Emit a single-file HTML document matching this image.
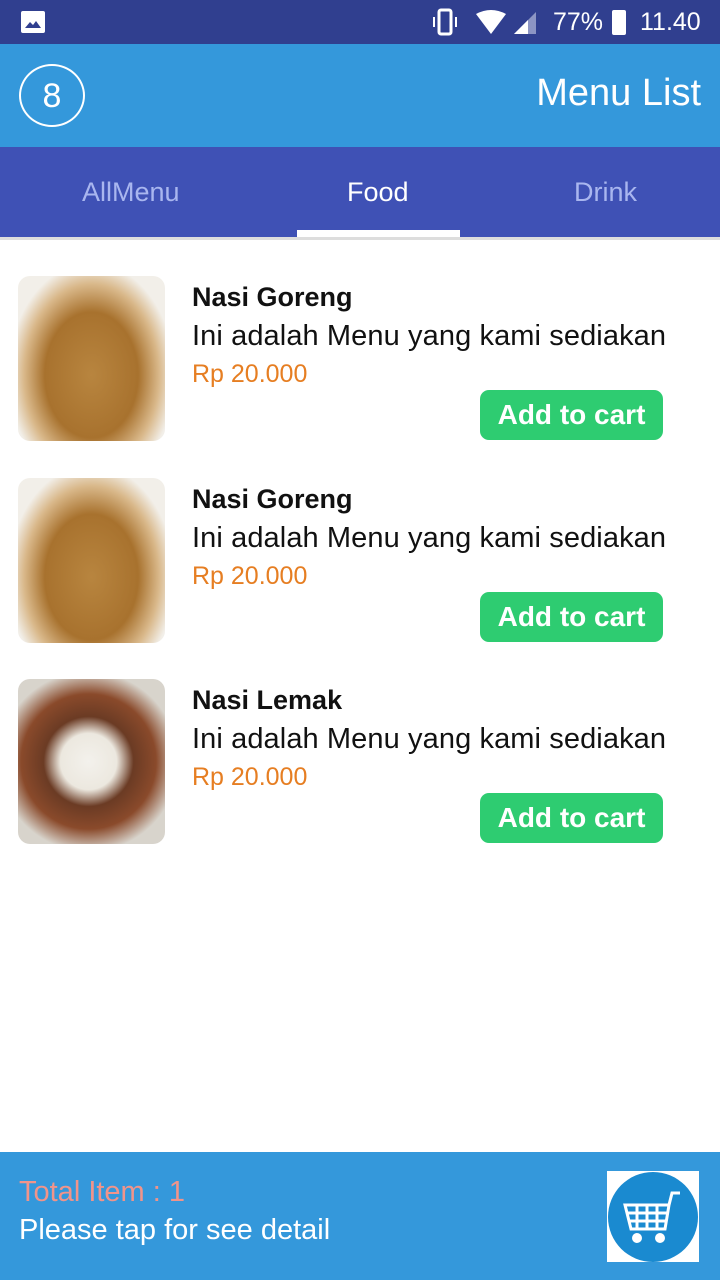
<!DOCTYPE html>
<html><head><meta charset="utf-8"><style>
*{margin:0;padding:0;box-sizing:border-box}
body{width:720px;height:1280px;position:relative;background:#fff;font-family:"Liberation Sans",sans-serif;overflow:hidden}
.sb{position:absolute;top:0;left:0;width:720px;height:44px;background:#303f8f;color:#fff}
.ab{position:absolute;top:44px;left:0;width:720px;height:103px;background:#3498db;color:#fff}
.tabs{position:absolute;top:147px;left:0;width:720px;height:90px;background:#3f51b5}
.tab{position:absolute;top:30px;font-size:27px;color:#a9b6ef}
.item{position:absolute;left:0;width:720px;height:170px}
.img{position:absolute;left:18px;top:0;width:147px;height:165px;border-radius:12px;overflow:hidden}
.t{position:absolute;left:192px;top:6px;font-size:27px;font-weight:bold;color:#111}
.d{position:absolute;left:192px;top:44px;font-size:29px;color:#111;letter-spacing:0.1px}
.p{position:absolute;left:192px;top:84px;font-size:25px;color:#e67e22}
.btn{position:absolute;left:480px;top:114px;width:183px;height:50px;border-radius:9px;background:#2ecc71;color:#fff;font-weight:bold;font-size:28px;text-align:center;line-height:50px}
.bb{position:absolute;top:1152px;left:0;width:720px;height:128px;background:#3498db}
</style></head><body>
<div class="sb">
<div style="position:absolute;left:21px;top:11px;width:24px;height:22px;background:#fff;border-radius:2px"><svg width="24" height="22"><path d="M4 17 L9 11 L12 14 L15 10 L20 17Z" fill="#303f8f"/></svg></div>
<svg style="position:absolute;left:432px;top:8px" width="110" height="30"><rect x="7" y="2" width="12" height="24" rx="2" fill="none" stroke="#fff" stroke-width="3"/><path d="M2 9v10M24 9v10" stroke="#fff" stroke-width="2"/><path d="M44 6 Q59 -2 74 6 L59 26Z" fill="#fff"/><path d="M82 26 L104 4 L104 26Z" fill="#8c95c4"/><path d="M82 26 L96 12 L96 26Z" fill="#fff"/></svg>
<div style="position:absolute;left:553px;top:8px;font-size:25px">77%</div>
<div style="position:absolute;left:612px;top:10px;width:14px;height:25px;background:#fff;border-radius:2px"></div>
<div style="position:absolute;left:640px;top:8px;font-size:25px">11.40</div>
</div>
<div class="ab">
<div style="position:absolute;left:19px;top:20px;width:66px;height:63px;border:2px solid #fff;border-radius:50%;text-align:center;line-height:60px;font-size:34px">8</div>
<div style="position:absolute;right:19px;top:28px;font-size:38px">Menu List</div>
</div>
<div class="tabs">
<div class="tab" style="left:82px">AllMenu</div>
<div class="tab" style="left:347px;color:#fff">Food</div>
<div class="tab" style="left:574px">Drink</div>
<div style="position:absolute;left:297px;top:83px;width:163px;height:7px;background:#fff"></div>
</div>
<div style="position:absolute;top:237px;left:0;width:720px;height:3px;background:#ddd"></div>

<div class="item" style="top:276px"><div class="img" style="background:radial-gradient(ellipse at 50% 60%,#b8853f 0,#a8722e 45%,#d9b88a 65%,#f2efe9 80%)"></div><div class="t">Nasi Goreng</div><div class="d">Ini adalah Menu yang kami sediakan</div><div class="p">Rp 20.000</div><div class="btn">Add to cart</div></div>
<div class="item" style="top:478px"><div class="img" style="background:radial-gradient(ellipse at 50% 60%,#b8853f 0,#a8722e 45%,#d9b88a 65%,#f2efe9 80%)"></div><div class="t">Nasi Goreng</div><div class="d">Ini adalah Menu yang kami sediakan</div><div class="p">Rp 20.000</div><div class="btn">Add to cart</div></div>
<div class="item" style="top:679px"><div class="img" style="background:radial-gradient(circle at 48% 50%,#f3f1ec 0,#ece8df 25%,#6b3b24 40%,#8a4a2b 60%,#d8d4cc 80%)"></div><div class="t">Nasi Lemak</div><div class="d">Ini adalah Menu yang kami sediakan</div><div class="p">Rp 20.000</div><div class="btn">Add to cart</div></div>

<div class="bb">
<div style="position:absolute;left:19px;top:24px;font-size:29px;color:#f1948a">Total Item : 1</div>
<div style="position:absolute;left:19px;top:62px;font-size:29px;color:#fff">Please tap for see detail</div>
<div style="position:absolute;left:607px;top:19px;width:92px;height:91px;background:#fff">
<svg width="92" height="91"><circle cx="46" cy="46" r="45" fill="#1a8ad0"/><path d="M18 34 H62 L58 58 H24Z M30 34 V58 M40 34 V58 M50 34 V58 M21 42 H60 M22 50 H59 M62 34 L65 22 H73" fill="none" stroke="#fff" stroke-width="3"/><circle cx="30" cy="67" r="5" fill="#fff"/><circle cx="53" cy="67" r="5" fill="#fff"/></svg>
</div>
</div>
</body></html>
